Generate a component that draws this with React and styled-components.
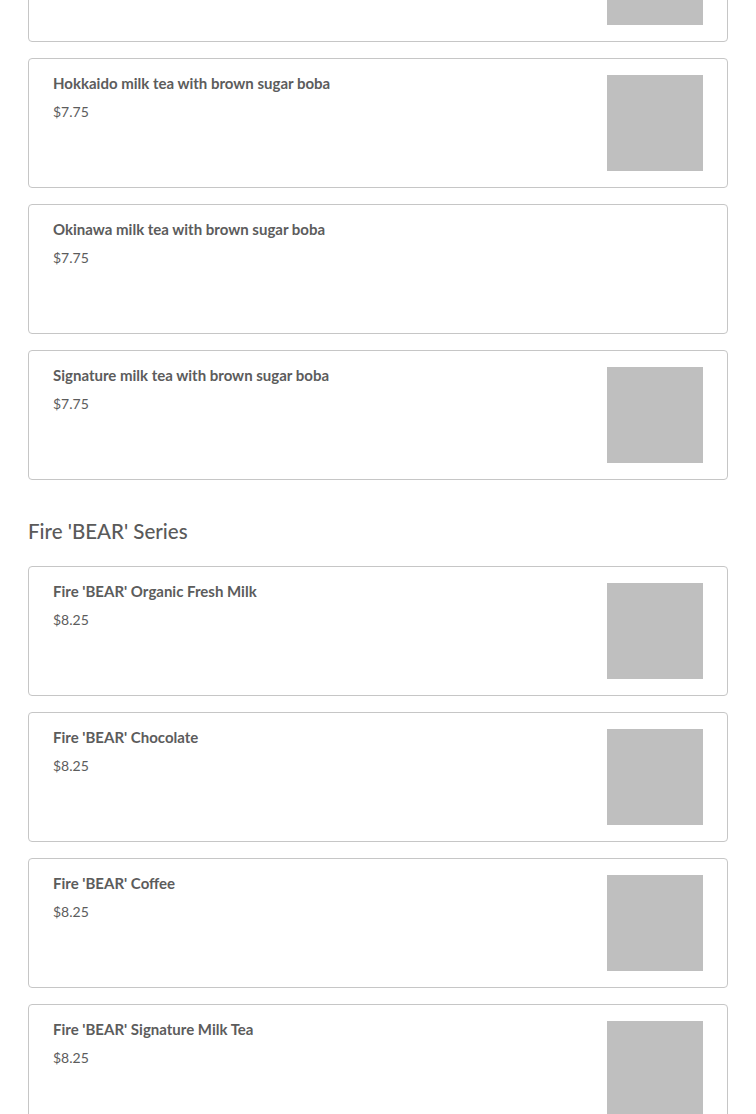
import React from "react";
import styled, { createGlobalStyle } from "styled-components";

const GlobalStyle = createGlobalStyle`
  body {
    margin: 0;
    background: #fff;
    font-family: Lato, "Open Sans", Arial, sans-serif;
    color: #595959;
  }
`;

// page is shown scrolled, so the first card starts above the viewport
const Page = styled.div`
  padding: 0 28px;
  margin-top: -88px;
`;

const Section = styled.section`
  display: flex;
  flex-direction: column;
`;

const SectionTitle = styled.h2`
  margin: 37px 0 21px;
  font-size: 20.5px;
  line-height: 28px;
  font-weight: 500;
  color: #5a5a5a;
`;

const ItemList = styled.div`
  display: flex;
  flex-direction: column;
  gap: 16px;
`;

const Card = styled.div`
  display: flex;
  justify-content: space-between;
  align-items: flex-start;
  min-height: 130px;
  box-sizing: border-box;
  padding: 16px 24px;
  border: 1px solid #c6c6c6;
  border-radius: 4px;
  background: #fff;
`;

const Info = styled.div`
  display: flex;
  flex-direction: column;
`;

const ItemName = styled.div`
  font-size: 15px;
  line-height: 16px;
  font-weight: 700;
  color: #5c5c5c;
  margin-bottom: 11px;
`;

const Price = styled.div`
  font-size: 14px;
  line-height: 20px;
  color: #5c5c5c;
`;

const Thumb = styled.div`
  width: 96px;
  height: 96px;
  flex-shrink: 0;
  background: #bfbfbf;
`;

const brownSugar = [
  { name: "Brown sugar boba milk", price: "$7.25", image: true },
  { name: "Hokkaido milk tea with brown sugar boba", price: "$7.75", image: true },
  { name: "Okinawa milk tea with brown sugar boba", price: "$7.75", image: false },
  { name: "Signature milk tea with brown sugar boba", price: "$7.75", image: true },
];

const fireBear = [
  { name: "Fire 'BEAR' Organic Fresh Milk", price: "$8.25", image: true },
  { name: "Fire 'BEAR' Chocolate", price: "$8.25", image: true },
  { name: "Fire 'BEAR' Coffee", price: "$8.25", image: true },
  { name: "Fire 'BEAR' Signature Milk Tea", price: "$8.25", image: true },
];

const MenuItem = ({ item }) => (
  <Card>
    <Info>
      <ItemName>{item.name}</ItemName>
      <Price>{item.price}</Price>
    </Info>
    {item.image && <Thumb />}
  </Card>
);

const App = () => {
  return (
    <>
      <GlobalStyle />
      <Page>
        <Section>
          <ItemList>
            {brownSugar.map((item) => (
              <MenuItem key={item.name} item={item} />
            ))}
          </ItemList>
        </Section>
        <Section>
          <SectionTitle>Fire 'BEAR' Series</SectionTitle>
          <ItemList>
            {fireBear.map((item) => (
              <MenuItem key={item.name} item={item} />
            ))}
          </ItemList>
        </Section>
      </Page>
    </>
  );
};

export default App;
